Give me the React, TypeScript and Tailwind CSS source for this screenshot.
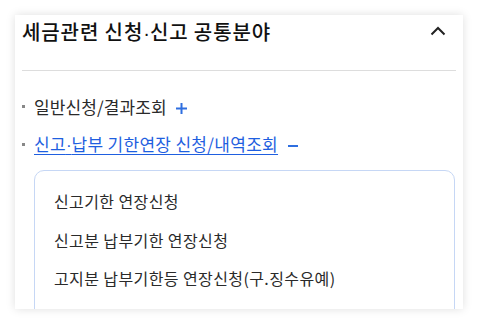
import React from 'react';

const font = { fontFamily: '"Noto Sans CJK KR", "Noto Sans", sans-serif' };

const subItems = ['신고기한 연장신청', '신고분 납부기한 연장신청', '고지분 납부기한등 연장신청(구.징수유예)'];

const App: React.FC = () => {
  return (
    <div className="w-[478px] h-[324px] bg-white pt-[15px] pl-[15px]" style={font}>
      {/* Card */}
      <div className="w-[448px] h-[294px] bg-white overflow-hidden shadow-[0_0_9px_rgba(0,0,0,0.13)] px-[7px]">
        <div className="h-[56px] flex items-start justify-between border-b border-[#dddddd] pt-[3px]">
          <h2 className="text-[20px] leading-[28px] font-medium text-[#111111] tracking-[0.9px]">
            세금관련 신청<span className="font-['Liberation_Sans'] tracking-[0px]">·</span>신고 공통분야
          </h2>
          <svg width="16" height="10" viewBox="0 0 16 10" className="mr-[10px] mt-[8px]">
            <polyline points="1.5,8.5 8,2 14.5,8.5" fill="none" stroke="#222222" strokeWidth="2" />
          </svg>
        </div>

        <ul className="pt-[17px]">
          <li className="h-[38px] flex items-center">
            <span className="w-[3px] h-[3px] bg-[#888888] mr-[9px] mb-[1px]" />
            <span className="text-[17px] text-[#2a2a2a] tracking-[0.1px]">일반신청/결과조회</span>
            <svg width="13" height="13" viewBox="0 0 13 13" className="ml-[8px] mt-[3px]">
              <path d="M6.5 1v11M1 6.5h11" stroke="#2f6fe0" strokeWidth="2" />
            </svg>
          </li>
          <li className="h-[38px] flex items-center">
            <span className="w-[3px] h-[3px] bg-[#888888] mr-[9px] mb-[1px]" />
            <a className="text-[17px] text-[#1f5fe0] underline underline-offset-[3px] tracking-[0.3px]">
              신고<span className="font-['Liberation_Sans'] tracking-[0px]">·</span>납부 기한연장 신청/내역조회
            </a>
            <svg width="12" height="12" viewBox="0 0 12 12" className="ml-[9px] mt-[1px]">
              <path d="M1 6h10" stroke="#2f6fe0" strokeWidth="2" />
            </svg>
          </li>
        </ul>

        <div className="ml-[12px] mr-[1px] mt-[6px] h-[160px] border border-[#c6d7f5] rounded-[10px] pt-[11px] pl-[19px]">
          {subItems.map((s) => (
            <div key={s} className="h-[38.5px] flex items-center text-[16px] text-[#2a2a2a] tracking-[0.4px]">
              {s}
            </div>
          ))}
        </div>
      </div>
    </div>
  );
};

export default App;
